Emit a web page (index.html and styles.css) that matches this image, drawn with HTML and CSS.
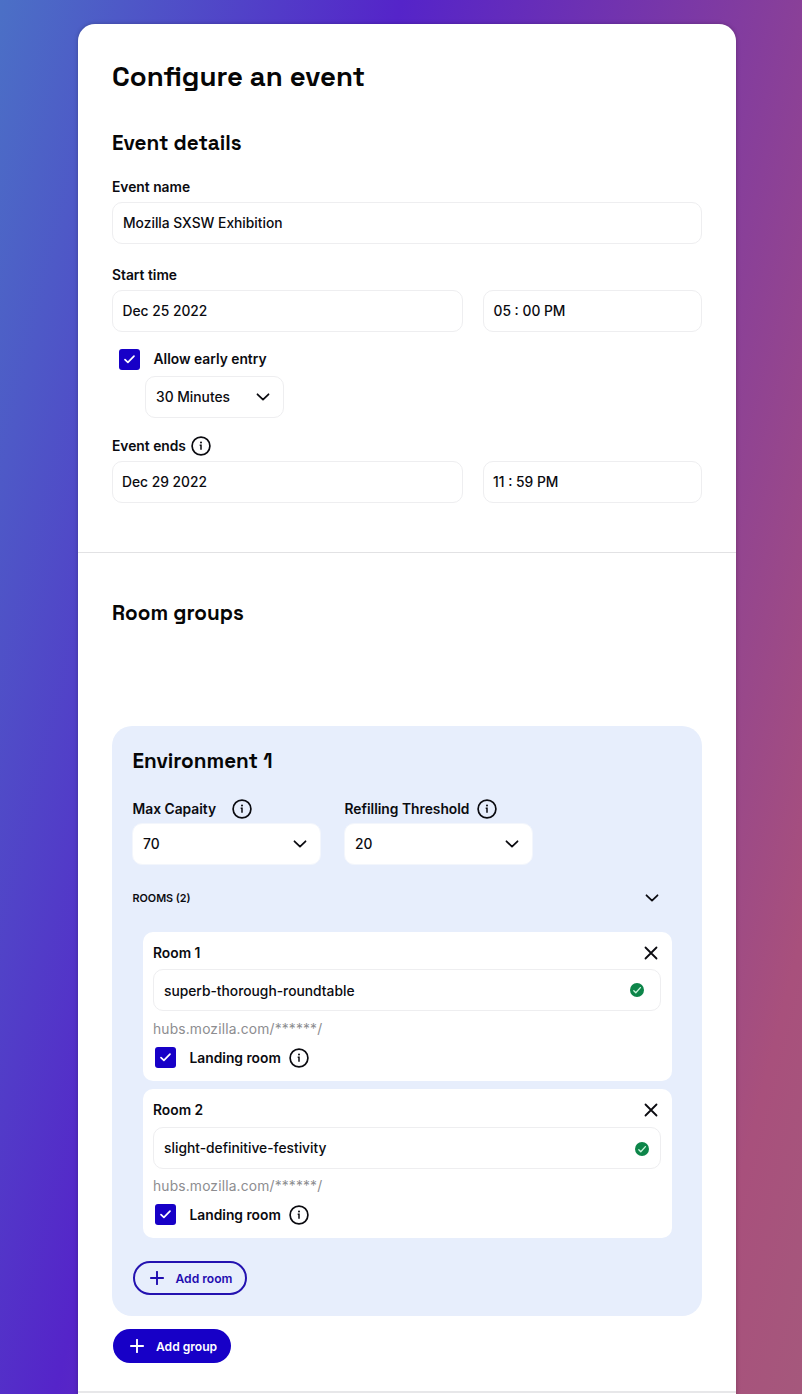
FILE: index.html
```html
<!DOCTYPE html>
<html lang="en">
<head>
<meta charset="utf-8">
<title>Configure an event</title>
<link rel="stylesheet" href="styles.css">
</head>
<body>
<svg class="defs" width="0" height="0" aria-hidden="true">
  <symbol id="info" viewBox="0 0 20 20"><circle cx="10" cy="10" r="8.900" fill="none" stroke="currentColor" stroke-width="1.700"/><circle cx="10" cy="6.600" r="1"/><path d="M8.700 9.200H10v4.600" fill="none" stroke="currentColor" stroke-width="1.500"/></symbol>
  <symbol id="chevron" viewBox="0 0 14 8"><path d="M1.500 1.300 7 6.600l5.500-5.300" fill="none" stroke="currentColor" stroke-width="1.800" stroke-linecap="round" stroke-linejoin="round"/></symbol>
  <symbol id="close" viewBox="0 0 14 14"><path d="M1.500 1.500l11 11M12.500 1.500l-11 11" fill="none" stroke="currentColor" stroke-width="1.800" stroke-linecap="round"/></symbol>
  <symbol id="check" viewBox="0 0 21 21"><path d="M6 10.600l2.900 2.700 6.100-6.200" fill="none" stroke="#fff" stroke-width="1.700" stroke-linecap="round" stroke-linejoin="round"/></symbol>
  <symbol id="valid" viewBox="0 0 14 14"><circle cx="7" cy="7" r="7" fill="#0d8549"/><path d="M3.800 7.800l2 2 4.600-5.200" fill="none" stroke="#c9f5dc" stroke-width="1.300" stroke-linecap="round" stroke-linejoin="round"/></symbol>
  <symbol id="plus" viewBox="0 0 14 14"><path d="M7 .8v12.400M.8 7h12.400" fill="none" stroke="currentColor" stroke-width="1.900" stroke-linecap="round"/></symbol>
</svg>
<main class="card">
  <section class="details">
    <h1>Configure an event</h1>
    <h2>Event details</h2>
    <div class="label">Event name</div>
    <div class="field">Mozilla SXSW Exhibition</div>
    <div class="label start-label">Start time</div>
    <div class="when">
      <div class="field">Dec 25 2022</div>
      <div class="field">05 : 00 PM</div>
    </div>
    <div class="option early"><span class="checkbox"><svg><use href="#check"/></svg></span>Allow early entry</div>
    <div class="field select minutes">30 Minutes<svg class="chevron"><use href="#chevron"/></svg></div>
    <div class="label ends-label">Event ends<svg class="info"><use href="#info"/></svg></div>
    <div class="when ends">
      <div class="field">Dec 29 2022</div>
      <div class="field">11 : 59 PM</div>
    </div>
  </section>
  <section class="groups">
    <h2>Room groups</h2>
    <div class="group">
      <h2 class="env">Environment 1</h2>
      <div class="limits">
        <div class="limit">
          <div class="label wide">Max Capaity<svg class="info"><use href="#info"/></svg></div>
          <div class="field select">70<svg class="chevron"><use href="#chevron"/></svg></div>
        </div>
        <div class="limit">
          <div class="label mid">Refilling Threshold<svg class="info"><use href="#info"/></svg></div>
          <div class="field select">20<svg class="chevron"><use href="#chevron"/></svg></div>
        </div>
      </div>
      <div class="rooms-head"><span>ROOMS (2)</span><svg class="chevron"><use href="#chevron"/></svg></div>
      <div class="rooms">
        <article class="room">
          <div class="room-head">Room 1<svg class="close"><use href="#close"/></svg></div>
          <div class="field slug">superb-thorough-roundtable<svg class="valid"><use href="#valid"/></svg></div>
          <div class="url">hubs.mozilla.com/******/</div>
          <div class="option"><span class="checkbox"><svg><use href="#check"/></svg></span>Landing room<svg class="info"><use href="#info"/></svg></div>
        </article>
        <article class="room">
          <div class="room-head">Room 2<svg class="close"><use href="#close"/></svg></div>
          <div class="field slug second">slight-definitive-festivity<svg class="valid"><use href="#valid"/></svg></div>
          <div class="url">hubs.mozilla.com/******/</div>
          <div class="option"><span class="checkbox"><svg><use href="#check"/></svg></span>Landing room<svg class="info"><use href="#info"/></svg></div>
        </article>
      </div>
      <button class="button outline"><svg><use href="#plus"/></svg>Add room</button>
    </div>
    <button class="button solid"><svg><use href="#plus"/></svg>Add group</button>
  </section>
</main>
</body>
</html>
```
FILE: styles.css
```css
* { box-sizing: border-box; }
html { height: 100%; }
body {
  margin: 0;
  height: 1394px;
  overflow: hidden;
  padding: 24px 66px 0 77.5px;
  background: linear-gradient(104deg, #4b70c6 0%, #5524c9 35%, #a8507c 90%, #a5587c 100%);
  font-family: Inter, "Liberation Sans", sans-serif;
  font-size: 13.8px;
  color: #0b0b10;
}
.defs { position: absolute; }
svg { flex: none; fill: currentColor; }
.card {
  height: 1400px;
  background: #fff;
  border-radius: 17px 17px 0 0;
  box-shadow: 0 0 4px rgba(0, 0, 0, .25);
}
h1, h2 { margin: 0; font-family: "Space Grotesk", Inter, sans-serif; font-weight: 600; color: #060606; }
h1 { height: 34px; line-height: 34px; font-size: 27.6px; }
h2 { height: 28px; line-height: 28px; font-size: 20.7px; }
.details { height: 529px; padding: 36px 34.5px 0; border-bottom: 1px solid #e2e2e4; }
.details h2 { margin-top: 35px; }
.label { display: flex; align-items: center; height: 20px; font-weight: 600; white-space: nowrap; }
.details h2 + .label { margin: 20px 0 5px; }
.field {
  display: flex;
  align-items: center;
  height: 42px;
  margin-top: 5px;
  padding: 0 10px 1px;
  background: #fff;
  border: 1px solid #eeeef0;
  border-radius: 10px;
  font-weight: 500;
}
.details .label + .field { margin-top: 0; }
.start-label { margin: 21px 0 5px; }
.when { display: grid; grid-template-columns: 351px 219px; gap: 20px; }
.when .field { margin-top: 0; padding-left: 9.5px; }
.ends { margin-left: -.5px; }
.option { display: flex; align-items: center; height: 21px; font-weight: 600; }
.checkbox { width: 21px; height: 21px; margin-right: 14px; background: #1700c7; border-radius: 3px; }
.checkbox svg { display: block; width: 21px; height: 21px; }
.early { margin: 16.5px 0 0 6.500px; }
.select { justify-content: space-between; padding-right: 13px; }
.minutes { width: 139px; margin: 6.500px 0 0 33px; }
.chevron { width: 14px; height: 8px; }
.info { width: 20px; height: 20px; margin-left: 5px; }
.label .info { position: relative; top: -.5px; }
.ends-label { margin: 18px 0 5px; }
.groups { padding: 46px 34.5px 0; }
.group {
  height: 590px;
  margin-top: 99px;
  padding: 21px 30px 0 20.5px;
  background: #e7eefc;
  border-radius: 20px;
}
.limits { display: flex; gap: 23px; margin: 24px 0 0 -.5px; }
.limit { width: 189px; }
.limit .field { margin-top: 4px; border-color: #f3f6fc; }
.limit .label { padding-left: .5px; }
.wide .info { margin-left: 15.5px; }
.mid .info { margin-left: 7.5px; }
.rooms-head {
  display: flex;
  align-items: center;
  justify-content: space-between;
  height: 20px;
  margin-top: 23px;
  padding-right: 13px;
  font-size: 10.800px;
  font-weight: 600;
}
.rooms { display: flex; flex-direction: column; gap: 8.5px; margin: 24px 0 0 10px; }
.room { height: 148.5px; padding: 11px 10.5px 0; background: #fff; border-radius: 10px; }
.room-head { display: flex; align-items: center; justify-content: space-between; height: 20px; padding-right: 3px; font-weight: 600; }
.close { width: 14px; height: 14px; margin-top: -1px; }
.slug { justify-content: space-between; margin-top: 6px; padding: 1px 16px 0 10px; }
.slug .valid { margin-top: -1px; }
.slug.second { margin-top: 7px; padding: 0 11px 0 10px; }
.slug.second .valid { margin-top: 2px; }
.second + .url { margin-top: 7px; }
.valid { width: 14px; height: 14px; }
.url { height: 20px; margin-top: 8px; line-height: 20px; color: #8d8d90; letter-spacing: .17px; }
.room .option { margin: 8px 0 0 1.500px; }
.room .info { margin-left: 8px; }
.button {
  display: flex;
  align-items: center;
  height: 34px;
  padding: 0 0 0 17px;
  border: 0;
  border-radius: 17px;
  font: 600 12.100px Inter, sans-serif;
  white-space: nowrap;
}
.button svg { width: 14px; height: 14px; margin-right: 12px; }
.outline { width: 114px; margin-top: 23.5px; padding-left: 15px; background: transparent; border: 2px solid #2412b0; color: #1f0cb0; }
.solid { width: 118px; margin: 13px 0 0 1px; background: #1700c7; color: #fff; }
.groups::after { content: ""; display: block; height: 2px; margin: 28px -34.5px 0; background: #e7e7e9; }
```
